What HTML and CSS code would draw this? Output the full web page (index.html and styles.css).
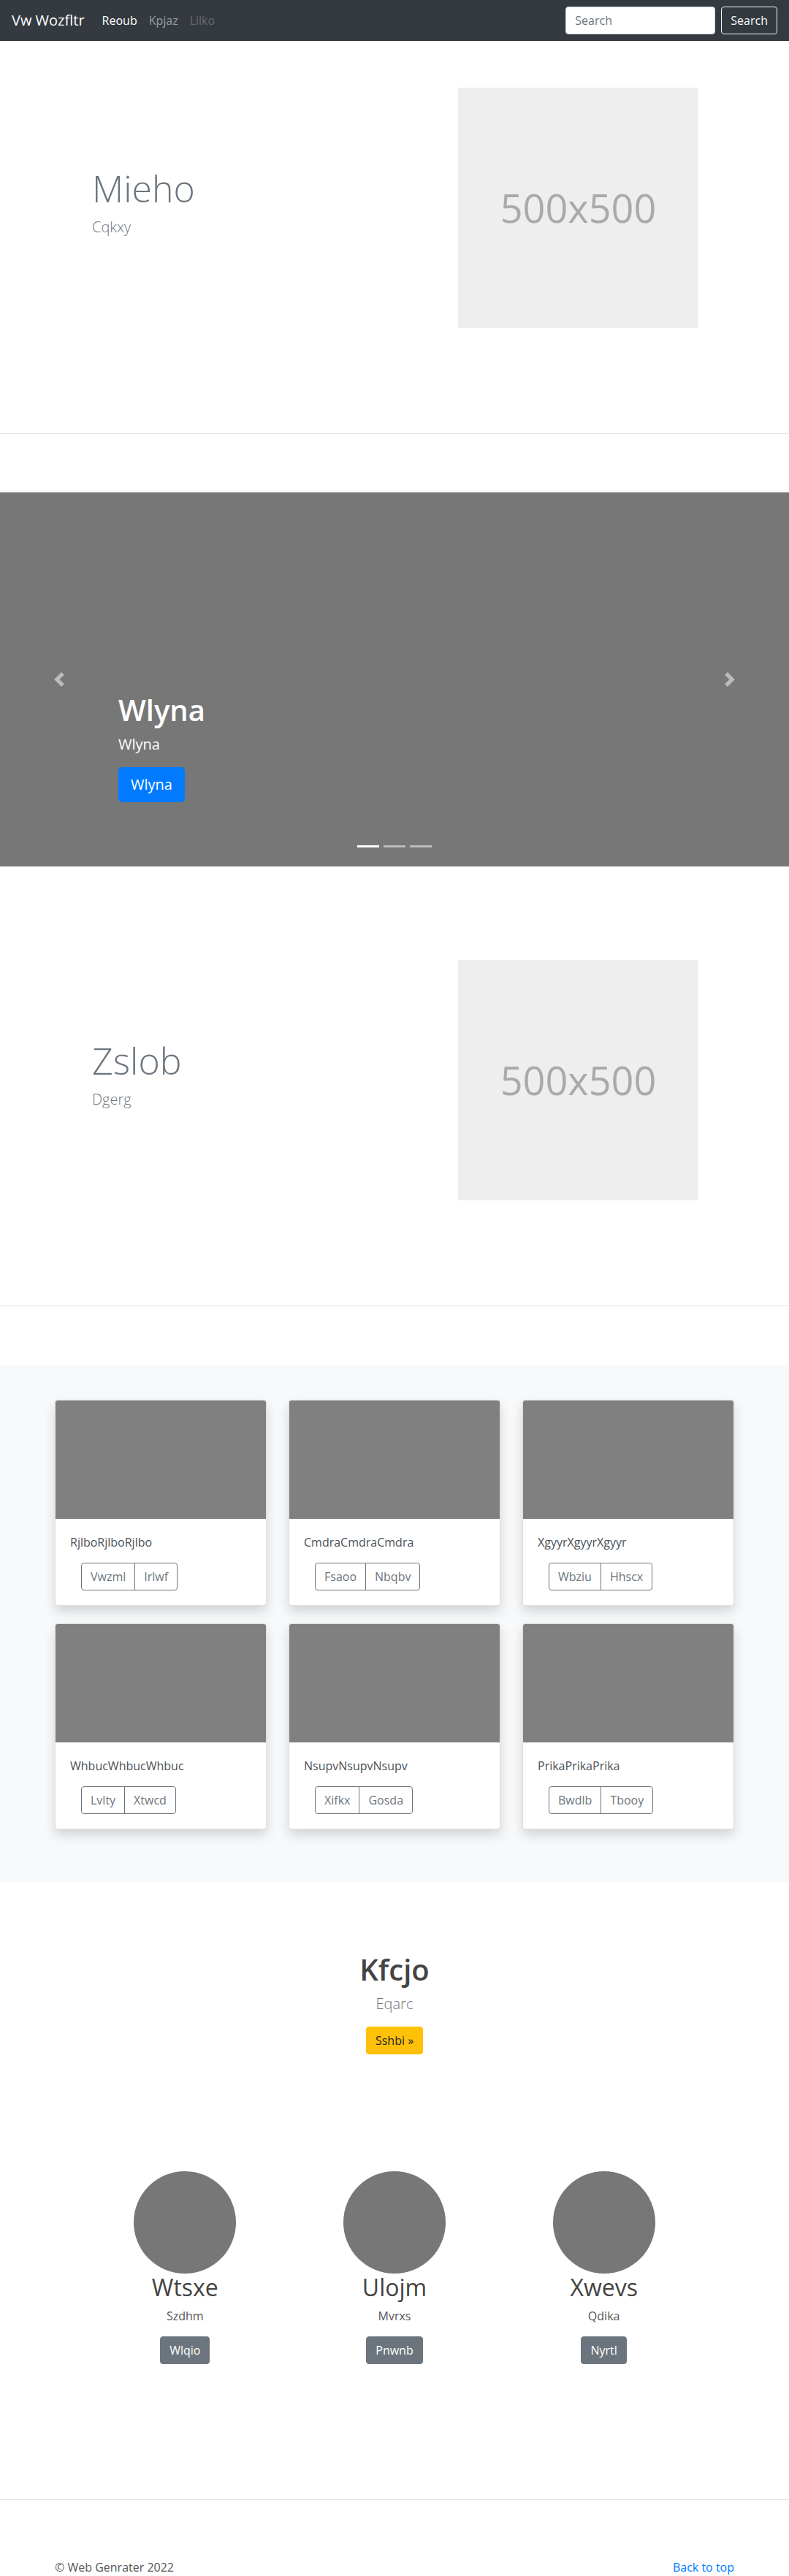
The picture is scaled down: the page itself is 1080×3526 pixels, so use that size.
FILE: index.html
```html
<!DOCTYPE html>
<html lang="en">
<head>
  <meta charset="UTF-8">
  <meta name="viewport" content="width=device-width, initial-scale=1.0">
  <title>Vw Wozfltr</title>
  <link rel="stylesheet" href="styles.css">
</head>
<body>
  <nav class="navbar">
    <a class="navbar-brand" href="#">Vw Wozfltr</a>
    <ul class="nav-links">
      <li class="active"><a href="#">Reoub</a></li>
      <li><a href="#">Kpjaz</a></li>
      <li class="disabled"><a href="#">Lilko</a></li>
    </ul>
    <form class="search">
      <input type="text" placeholder="Search">
      <button type="submit">Search</button>
    </form>
  </nav>

  <section class="featurette">
    <div class="featurette-row">
      <div class="featurette-text">
        <h2 class="featurette-heading">Mieho</h2>
        <p class="lead">Cqkxy</p>
      </div>
      <div class="placeholder">500x500</div>
    </div>
  </section>

  <hr class="divider">

  <div class="carousel">
    <a class="carousel-control prev" href="#">
      <svg width="20" height="20" viewBox="0 0 8 8"><path fill="#fff" d="M5.25 0l-4 4 4 4 1.5-1.5-2.5-2.5 2.5-2.5-1.5-1.5z"/></svg>
    </a>
    <div class="carousel-caption">
      <h1>Wlyna</h1>
      <p class="caption-sub">Wlyna</p>
      <p class="caption-action"><a class="btn btn-lg btn-primary" href="#">Wlyna</a></p>
    </div>
    <a class="carousel-control next" href="#">
      <svg width="20" height="20" viewBox="0 0 8 8"><path fill="#fff" d="M2.75 0l-1.5 1.5 2.5 2.5-2.5 2.5 1.5 1.5 4-4-4-4z"/></svg>
    </a>
    <ol class="carousel-indicators">
      <li class="active"></li>
      <li></li>
      <li></li>
    </ol>
  </div>

  <section class="featurette">
    <div class="featurette-row">
      <div class="featurette-text">
        <h2 class="featurette-heading">Zslob</h2>
        <p class="lead">Dgerg</p>
      </div>
      <div class="placeholder">500x500</div>
    </div>
  </section>

  <hr class="divider">

  <section class="album">
    <div class="card-grid">
      <div class="card">
        <div class="card-img"></div>
        <div class="card-body">
          <p class="card-text">RjlboRjlboRjlbo</p>
          <div class="btn-group"><a class="btn btn-outline" href="#">Vwzml</a><a class="btn btn-outline" href="#">Irlwf</a></div>
        </div>
      </div>
      <div class="card">
        <div class="card-img"></div>
        <div class="card-body">
          <p class="card-text">CmdraCmdraCmdra</p>
          <div class="btn-group"><a class="btn btn-outline" href="#">Fsaoo</a><a class="btn btn-outline" href="#">Nbqbv</a></div>
        </div>
      </div>
      <div class="card">
        <div class="card-img"></div>
        <div class="card-body">
          <p class="card-text">XgyyrXgyyrXgyyr</p>
          <div class="btn-group"><a class="btn btn-outline" href="#">Wbziu</a><a class="btn btn-outline" href="#">Hhscx</a></div>
        </div>
      </div>
      <div class="card">
        <div class="card-img"></div>
        <div class="card-body">
          <p class="card-text">WhbucWhbucWhbuc</p>
          <div class="btn-group"><a class="btn btn-outline" href="#">Lvlty</a><a class="btn btn-outline" href="#">Xtwcd</a></div>
        </div>
      </div>
      <div class="card">
        <div class="card-img"></div>
        <div class="card-body">
          <p class="card-text">NsupvNsupvNsupv</p>
          <div class="btn-group"><a class="btn btn-outline" href="#">Xifkx</a><a class="btn btn-outline" href="#">Gosda</a></div>
        </div>
      </div>
      <div class="card">
        <div class="card-img"></div>
        <div class="card-body">
          <p class="card-text">PrikaPrikaPrika</p>
          <div class="btn-group"><a class="btn btn-outline" href="#">Bwdlb</a><a class="btn btn-outline" href="#">Tbooy</a></div>
        </div>
      </div>
    </div>
  </section>

  <section class="jumbo">
    <h1>Kfcjo</h1>
    <p class="lead">Eqarc</p>
    <p class="jumbo-action"><a class="btn btn-warning" href="#">Sshbi &raquo;</a></p>
  </section>

  <section class="marketing">
    <div class="member">
      <div class="avatar"></div>
      <h2>Wtsxe</h2>
      <p>Szdhm</p>
      <p><a class="btn btn-secondary" href="#">Wlqio</a></p>
    </div>
    <div class="member">
      <div class="avatar"></div>
      <h2>Ulojm</h2>
      <p>Mvrxs</p>
      <p><a class="btn btn-secondary" href="#">Pnwnb</a></p>
    </div>
    <div class="member">
      <div class="avatar"></div>
      <h2>Xwevs</h2>
      <p>Qdika</p>
      <p><a class="btn btn-secondary" href="#">Nyrtl</a></p>
    </div>
  </section>

  <hr class="divider">

  <footer>
    <p>&copy; Web Genrater 2022</p>
    <a href="#">Back to top</a>
  </footer>
</body>
</html>
```

FILE: styles.css
```css
* {
  box-sizing: border-box;
}
body {
  margin: 0;
  font-family: "Open Sans", "Segoe UI", Arial, sans-serif;
  font-size: 16px;
  line-height: 1.5;
  color: #212529;
  background-color: #ffffff;
}
a {
  text-decoration: none;
}

/* Navbar */
.navbar {
  height: 56px;
  background-color: #343a40;
  display: flex;
  align-items: center;
  padding: 0 16px;
}
.navbar-brand {
  font-size: 20px;
  line-height: 30px;
  color: #ffffff;
  margin-right: 16px;
}
.nav-links {
  display: flex;
  list-style: none;
  margin: 0;
  padding: 0;
  flex: 1;
}
.nav-links a {
  display: block;
  padding: 8px;
  color: rgba(255, 255, 255, 0.5);
}
.nav-links .active a {
  color: #ffffff;
}
.nav-links .disabled a {
  color: rgba(255, 255, 255, 0.25);
}
.search {
  display: flex;
  align-items: center;
}
.search input {
  width: 205px;
  height: 38px;
  padding: 6px 12px;
  font: inherit;
  color: #495057;
  border: 1px solid #ced4da;
  border-radius: 4px;
  margin-right: 8px;
}
.search input::placeholder {
  color: #6c757d;
}
.search button {
  height: 38px;
  padding: 6px 12px;
  font: inherit;
  color: #f8f9fa;
  background: transparent;
  border: 1px solid #f8f9fa;
  border-radius: 4px;
}

/* Featurettes */
.featurette {
  padding: 64px 0;
}
.featurette-row {
  width: 960px;
  margin: 0 auto;
  display: flex;
  align-items: center;
}
.featurette-text {
  flex: 1;
  padding-left: 66px;
}
.featurette-heading {
  font-size: 50px;
  font-weight: 300;
  line-height: 1.2;
  color: #6c757d;
  margin: 0 0 8px;
}
.lead {
  font-size: 20px;
  font-weight: 300;
  color: #6c757d;
  margin: 0 0 16px;
}
.placeholder {
  width: 329px;
  height: 329px;
  margin-right: 64px;
  background-color: #eeeeee;
  color: #aaaaaa;
  font-size: 54px;
  display: flex;
  align-items: center;
  justify-content: center;
}
.divider {
  border: 0;
  border-top: 1px solid rgba(0, 0, 0, 0.1);
  margin: 80px 0;
}

/* Carousel */
.carousel {
  position: relative;
  height: 512px;
  background-color: #777777;
  margin-bottom: 64px;
}
.carousel-control {
  position: absolute;
  top: 0;
  bottom: 0;
  width: 15%;
  display: flex;
  align-items: center;
  justify-content: center;
  opacity: 0.5;
}
.carousel-control.prev {
  left: 0;
}
.carousel-control.next {
  right: 0;
}
.carousel-caption {
  position: absolute;
  left: 15%;
  right: 15%;
  bottom: 52px;
  padding: 20px 0;
  color: #ffffff;
}
.carousel-caption h1 {
  font-size: 40px;
  font-weight: 600;
  line-height: 1.2;
  margin: 0 0 8px;
}
.caption-sub {
  font-size: 20px;
  line-height: 30px;
  margin: 0 0 16px;
}
.caption-action {
  margin: 0 0 16px;
  line-height: 0;
}
.carousel-indicators {
  position: absolute;
  left: 0;
  right: 0;
  bottom: 26px;
  display: flex;
  justify-content: center;
  list-style: none;
  margin: 0;
  padding: 0;
}
.carousel-indicators li {
  width: 30px;
  height: 3px;
  margin: 0 3px;
  background-color: #ffffff;
  opacity: 0.5;
}
.carousel-indicators .active {
  opacity: 1;
}

/* Buttons */
.btn {
  display: inline-block;
  padding: 6px 12px;
  font-size: 16px;
  line-height: 24px;
  border: 1px solid transparent;
  border-radius: 4px;
}
.btn-lg {
  padding: 8px 16px;
  font-size: 20px;
  line-height: 30px;
  border-radius: 5px;
}
.btn-primary {
  background-color: #007bff;
  border-color: #007bff;
  color: #ffffff;
}
.btn-warning {
  background-color: #ffc107;
  border-color: #ffc107;
  color: #212529;
}
.btn-secondary {
  background-color: #6c757d;
  border-color: #6c757d;
  color: #ffffff;
}
.btn-outline {
  color: #6c757d;
  border-color: #6c757d;
}

/* Album */
.album {
  background-color: #f8f9fa;
  padding: 48px 0 72px;
}
.card-grid {
  width: 930px;
  margin: 0 auto;
  display: grid;
  grid-template-columns: repeat(3, 1fr);
  column-gap: 30px;
  row-gap: 24px;
}
.card {
  background-color: #ffffff;
  border: 1px solid rgba(0, 0, 0, 0.125);
  border-radius: 4px;
  box-shadow: 0 8px 16px rgba(0, 0, 0, 0.15);
  overflow: hidden;
}
.card-img {
  height: 162px;
  background-color: #808080;
}
.card-body {
  padding: 20px;
}
.card-text {
  margin: 0 0 16px;
  color: #495057;
}
.btn-group {
  display: inline-flex;
  margin-left: 15px;
}
.btn-group .btn + .btn {
  margin-left: -1px;
  border-top-left-radius: 0;
  border-bottom-left-radius: 0;
}
.btn-group .btn:first-child {
  border-top-right-radius: 0;
  border-bottom-right-radius: 0;
}

/* Jumbotron */
.jumbo {
  padding: 96px 0;
  text-align: center;
}
.jumbo h1 {
  font-size: 40px;
  font-weight: 600;
  line-height: 1.2;
  color: #444444;
  margin: 0 0 8px;
}
.jumbo .lead {
  line-height: 30px;
}
.jumbo-action {
  margin: 0;
}

/* Marketing */
.marketing {
  width: 860px;
  margin: 0 auto;
  padding: 64px 0 105px;
  display: grid;
  grid-template-columns: repeat(3, 1fr);
  text-align: center;
}
.avatar {
  width: 140px;
  height: 140px;
  border-radius: 50%;
  background-color: #777777;
  margin: 0 auto;
}
.member h2 {
  font-size: 32px;
  font-weight: 400;
  line-height: 1.2;
  color: #444444;
  margin: 0 0 8px;
}
.member p {
  margin: 0 0 16px;
  color: #555555;
}
.member p:last-child {
  margin-bottom: 0;
}

/* Footer */
footer {
  width: 930px;
  margin: 0 auto;
  display: flex;
  justify-content: space-between;
  padding-bottom: 48px;
}
footer p {
  margin: 0;
  color: #555555;
}
footer a {
  color: #007bff;
}
```
